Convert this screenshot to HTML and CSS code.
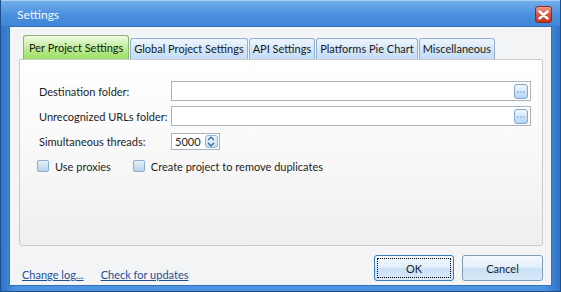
FILE: index.html
```html
<!DOCTYPE html>
<html lang="en">
<head>
    <meta charset="UTF-8">
    <title>Settings</title>
    <link rel="stylesheet" href="styles.css">
</head>
<body>
    <div class="window">
        <div class="titlebar">
            <span class="title">Settings</span>
            <span class="close">
                <svg width="11" height="10" viewBox="0 0 11 10">
                    <path d="M1.5 1.5 L9.5 8.5 M9.5 1.5 L1.5 8.5" stroke="#fff" stroke-width="2.4" stroke-linecap="round"/>
                </svg>
            </span>
        </div>

        <div class="client">
            <div class="tabs">
                <div class="tab active">Per Project Settings</div>
                <div class="tab">Global Project Settings</div>
                <div class="tab">API Settings</div>
                <div class="tab">Platforms Pie Chart</div>
                <div class="tab">Miscellaneous</div>
            </div>

            <div class="panel">
                <div class="row">
                    <label>Destination folder:</label>
                    <div class="path">
                        <span class="browse">
                            <svg width="12" height="13" viewBox="0 0 12 13">
                                <path d="M2.5 7h1M5.5 7h1M8.5 7h1" stroke="#2f5a8c" stroke-width="1"/>
                            </svg>
                        </span>
                    </div>
                </div>
                <div class="row">
                    <label>Unrecognized URLs folder:</label>
                    <div class="path">
                        <span class="browse">
                            <svg width="12" height="13" viewBox="0 0 12 13">
                                <path d="M2.5 7h1M5.5 7h1M8.5 7h1" stroke="#2f5a8c" stroke-width="1"/>
                            </svg>
                        </span>
                    </div>
                </div>
                <div class="row">
                    <label>Simultaneous threads:</label>
                    <div class="spinner">
                        <span class="value">5000</span>
                        <span class="arrows">
                            <svg width="12" height="13" viewBox="0 0 12 13">
                                <path d="M3 5 L6 2 L9 5 M3 8 L6 11 L9 8" fill="none" stroke="#2c5f9e" stroke-width="1.2"/>
                            </svg>
                        </span>
                    </div>
                </div>
                <div class="checks">
                    <span class="check"><span class="box"></span>Use proxies</span>
                    <span class="check"><span class="box"></span>Create project to remove duplicates</span>
                </div>
            </div>

            <div class="footer">
                <div class="links">
                    <a href="#">Change log...</a>
                    <a href="#">Check for updates</a>
                </div>
                <div class="buttons">
                    <button class="default"><span class="focus">OK</span></button>
                    <button>Cancel</button>
                </div>
            </div>
        </div>
    </div>
</body>
</html>
```
FILE: styles.css
```css
body {
    margin: 0;
    font-family: Lato, "Liberation Sans", sans-serif;
    font-size: 11px;
    color: #1e1e1e;
    background: #ffffff;
}
.window {
    width: 561px;
    height: 292px;
    box-sizing: border-box;
    padding: 0 8px 5px 8px;
    background: linear-gradient(to right, #2f74c8, #4c93e0 3%, #4c93e0 97%, #2f74c8);
    border: 1px solid #1d4f8f;
    border-top: none;
    display: flex;
    flex-direction: column;
}
.titlebar {
    height: 25px;
    margin: 0 -8px;
    padding: 0 8px 0 16px;
    display: flex;
    align-items: center;
    justify-content: space-between;
    background: linear-gradient(#6fadec, #4b90dd 55%, #3f86d6);
    border-top: 1px solid #a9cdf2;
}
.title {
    color: #f4f8fd;
    font-size: 12px;
    margin-top: 2px;
}
.close {
    width: 17px;
    height: 17px;
    box-sizing: border-box;
    display: flex;
    align-items: center;
    justify-content: center;
    border: 1px solid #8e2a22;
    border-radius: 3px;
    background: linear-gradient(#f09a88, #d9533f 50%, #c4321f);
    margin-top: 2px;
}
.client {
    flex: 1;
    background: #f3f4f6;
    border: 1px solid #3471bd;
    padding: 8px 8px 0 9px;
    display: flex;
    flex-direction: column;
}
.tabs {
    display: flex;
    align-items: flex-end;
    gap: 1px;
    padding-left: 4px;
    height: 24px;
}
.tab {
    height: 20px;
    line-height: 19px;
    padding: 0 3px;
    border: 1px solid #93b0d0;
    border-bottom: none;
    border-radius: 3px 3px 0 0;
    background: linear-gradient(#eef5fd, #d5e7f8 50%, #c3dcf4);
    color: #1a1a1a;
    white-space: nowrap;
}
.tab.active {
    height: 23px;
    line-height: 23px;
    padding: 0 5px;
    border-color: #8cb46c;
    background: linear-gradient(#f1fbe6, #c4efa0 45%, #9cde62);
}
.panel {
    height: 187px;
    box-sizing: border-box;
    border: 1px solid #c9cdd2;
    border-radius: 0 2px 3px 3px;
    background: linear-gradient(#ffffff, #fafafa 40%, #efefef);
    padding: 21px 11px 0 19px;
    display: flex;
    flex-direction: column;
    gap: 5px;
}
.row {
    display: flex;
    align-items: center;
    height: 20px;
}
.row label {
    width: 132px;
    flex-shrink: 0;
}
.path {
    flex: 1;
    height: 20px;
    box-sizing: border-box;
    border: 1px solid #acb2b9;
    background: #ffffff;
    display: flex;
    align-items: center;
    justify-content: flex-end;
    padding-right: 2px;
}
.browse {
    width: 14px;
    height: 15px;
    box-sizing: border-box;
    border: 1px solid #7ea4cc;
    border-radius: 3px;
    background: linear-gradient(#f3f9ff, #cfe4f9 55%, #b5d5f3);
    display: flex;
}
.spinner {
    width: 49px;
    height: 17px;
    box-sizing: border-box;
    border: 1px solid #acb2b9;
    background: #ffffff;
    display: flex;
    align-items: center;
    justify-content: space-between;
    padding: 0 1px 0 3px;
}
.arrows {
    width: 13px;
    height: 13px;
    box-sizing: border-box;
    border: 1px solid #8fb1d6;
    border-radius: 3px;
    background: linear-gradient(#eef6ff, #c6def6);
    display: flex;
}
.arrows svg {
    margin: -1px 0 0 -1px;
}
.checks {
    display: flex;
    align-items: center;
    height: 20px;
    margin-left: -2px;
    gap: 22px;
}
.check {
    display: flex;
    align-items: center;
    gap: 6px;
}
.box {
    width: 12px;
    height: 12px;
    box-sizing: border-box;
    border: 1px solid #8aaccf;
    border-radius: 2px;
    background: linear-gradient(#e4eff9, #b9d3ec);
}
.footer {
    flex: 1;
    display: flex;
    justify-content: space-between;
    padding: 9px 0 0 3px;
}
.links {
    display: flex;
    gap: 17px;
    padding-top: 13px;
}
.links a {
    color: #1f4e96;
    text-decoration: underline;
}
.buttons {
    display: flex;
    gap: 8px;
    align-items: flex-start;
}
button {
    font-family: Lato, "Liberation Sans", sans-serif;
    font-size: 11px;
    color: #1e1e1e;
    width: 81px;
    height: 26px;
    border: 1px solid #7f9db9;
    border-radius: 3px;
    background: linear-gradient(#f4f9fe, #e3effb 45%, #c9e0f6 55%, #d9eaf9);
    padding: 0;
}
button.default {
    width: 80px;
    border-color: #3d7bbd;
    padding: 2px;
}
.focus {
    display: block;
    height: 100%;
    box-sizing: border-box;
    border: 1px dotted #000;
    line-height: 19px;
}
```
